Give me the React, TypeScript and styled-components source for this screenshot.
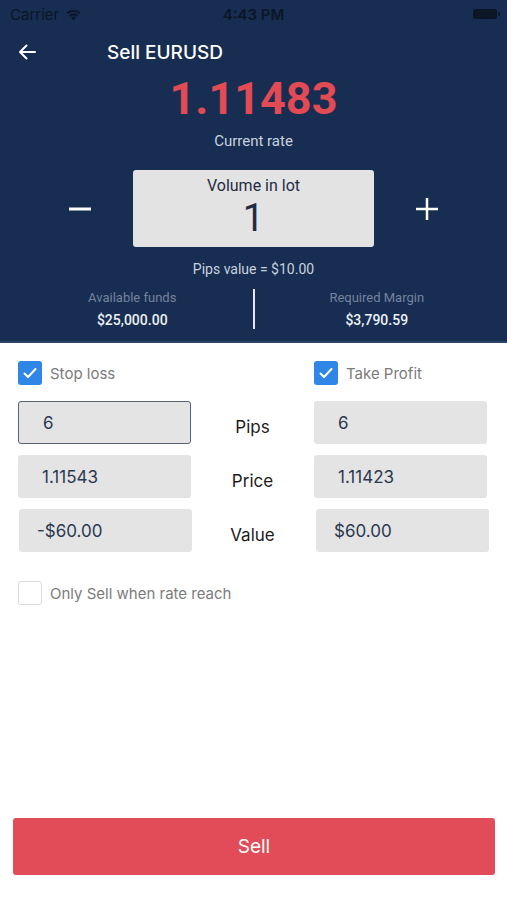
import React from 'react';
import styled, { createGlobalStyle } from 'styled-components';

const GlobalStyle = createGlobalStyle`
  * { box-sizing: border-box; }
  html, body { margin: 0; padding: 0; background: #ffffff; }
  body { font-family: Inter, "Noto Sans", sans-serif; }
`;

const Screen = styled.div`
  width: 507px;
  height: 900px;
  display: flex;
  flex-direction: column;
  background: #ffffff;
  overflow: hidden;
`;

// Header area
const Header = styled.header`
  background: #172d52;
  border-bottom: 2px solid #2c4468;
  padding-bottom: 12px;
`;

const StatusBar = styled.div`
  height: 28px;
  display: grid;
  grid-template-columns: 1fr auto 1fr;
  align-items: center;
  padding: 0 10px;
  color: #0b1626;
  font-size: 15px;
`;

const Carrier = styled.div`
  display: flex;
  align-items: center;
  gap: 6px;
`;

const Clock = styled.div`
  font-weight: 600;
`;

const Battery = styled.div`
  justify-self: end;
  width: 24px;
  height: 10px;
  border-radius: 3px;
  background: #0b1626;
  position: relative;
  &::after {
    content: '';
    position: absolute;
    right: -3px;
    top: 3px;
    width: 2px;
    height: 4px;
    border-radius: 1px;
    background: #0b1626;
  }
`;

const NavBar = styled.div`
  height: 48px;
  display: flex;
  align-items: center;
  padding-left: 18px;
`;

const BackButton = styled.button`
  width: 89px;
  height: 48px;
  padding: 0;
  border: none;
  background: none;
  display: flex;
  align-items: center;
`;

const NavTitle = styled.h1`
  margin: 0;
  font-size: 19px;
  font-weight: 500;
  color: #ffffff;
`;

const RateBlock = styled.div`
  display: flex;
  flex-direction: column;
  align-items: center;
  font-family: Roboto, sans-serif;
`;

const Rate = styled.div`
  font-size: 45px;
  font-weight: 700;
  line-height: 46px;
  color: #e24a54;
`;

const RateLabel = styled.div`
  margin-top: 10px;
  font-size: 15px;
  line-height: 18px;
  color: #c9d2df;
`;

const VolumeRow = styled.div`
  margin-top: 20px;
  display: flex;
  align-items: center;
  justify-content: center;
  gap: 42px;
  font-family: Roboto, sans-serif;
`;

const StepButton = styled.button`
  width: 22px;
  height: 22px;
  padding: 0;
  border: none;
  background: none;
  display: flex;
  align-items: center;
  justify-content: center;
`;

const VolumeBox = styled.div`
  width: 241px;
  height: 77px;
  background: #e3e3e3;
  border-radius: 3px;
  display: flex;
  flex-direction: column;
  align-items: center;
  padding-top: 6px;
  color: #1f2c44;
`;

const VolumeLabel = styled.div`
  font-size: 16px;
  line-height: 20px;
`;

const VolumeValue = styled.div`
  font-size: 38px;
  line-height: 44px;
`;

const PipsValue = styled.div`
  margin-top: 12px;
  text-align: center;
  font-family: Roboto, sans-serif;
  font-size: 14px;
  line-height: 20px;
  color: #c9d2df;
`;

const Stats = styled.div`
  margin-top: 10px;
  display: grid;
  grid-template-columns: 1fr 2px 1fr;
  align-items: center;
  font-family: Roboto, sans-serif;
`;

const Stat = styled.div<{ $side: 'left' | 'right' }>`
  display: flex;
  flex-direction: column;
  align-items: center;
  gap: 4px;
  padding-left: ${(p) => (p.$side === 'left' ? '12px' : '0')};
  padding-right: ${(p) => (p.$side === 'right' ? '8px' : '0')};
`;

const StatLabel = styled.div`
  font-size: 13px;
  line-height: 18px;
  color: #76849d;
`;

const StatValue = styled.div`
  font-size: 14px;
  font-weight: 500;
  line-height: 18px;
  color: #eef1f6;
`;

const Divider = styled.div`
  width: 2px;
  height: 40px;
  background: #e6eaf0;
`;

// Form area
const Form = styled.section`
  flex: 1;
  padding: 16px 20px 0 18px;
`;

const Grid = styled.div`
  display: grid;
  grid-template-columns: 173px 1fr 173px;
  row-gap: 11px;
  align-items: center;
`;

const CheckRow = styled.label`
  display: flex;
  align-items: center;
  gap: 8px;
  height: 28px;
  margin-bottom: 3px;
  font-size: 15px;
  color: #7b7b7b;
`;

const Box = styled.span<{ $checked?: boolean }>`
  width: 24px;
  height: 24px;
  border-radius: 3px;
  display: flex;
  align-items: center;
  justify-content: center;
  background: ${(p) => (p.$checked ? '#2f86e6' : '#ffffff')};
  border: ${(p) => (p.$checked ? 'none' : '1.5px solid #dcdcdc')};
`;

const Field = styled.div<{ $focused?: boolean; $pad?: number; $shift?: number }>`
  height: 43px;
  background: #e4e4e4;
  border-radius: 3px;
  display: flex;
  align-items: center;
  padding-left: ${(p) => p.$pad ?? 24}px;
  margin-left: ${(p) => p.$shift ?? 0}px;
  margin-right: ${(p) => -(p.$shift ?? 0)}px;
  border: ${(p) => (p.$focused ? '1.5px solid #56627a' : 'none')};
  font-size: 17px;
  color: #2b3850;
`;

const RowLabel = styled.div`
  text-align: center;
  padding-top: 8px;
  font-size: 17px;
  color: #1c1c1c;
`;

const LimitRow = styled(CheckRow)`
  margin-top: 27px;
`;

const Footer = styled.div`
  padding: 0 12px 25px 13px;
`;

const SellButton = styled.button`
  width: 100%;
  height: 57px;
  border: none;
  border-radius: 3px;
  background: #e24b58;
  color: #ffffff;
  font-family: Inter, sans-serif;
  font-size: 19px;
`;

const Check = () => (
  <svg width="16" height="16" viewBox="0 0 16 16" fill="none">
    <path d="M2.5 8.5l3.5 3.5 7.5-8" stroke="#fff" strokeWidth="2" strokeLinecap="round" strokeLinejoin="round" />
  </svg>
);

const App = () => {
  return (
    <Screen>
      <GlobalStyle />
      <Header>
        <StatusBar>
          <Carrier>
            Carrier
            <svg width="17" height="13" viewBox="0 0 17 13">
              <path d="M8.5 12.5l2.4-2.9a3.6 3.6 0 0 0-4.8 0z" fill="#0b1626" />
              <path d="M3.9 7.2a6.7 6.7 0 0 1 9.2 0l-1.4 1.6a4.6 4.6 0 0 0-6.4 0z" fill="#0b1626" />
              <path d="M1.5 4.5a10.2 10.2 0 0 1 14 0l-1.4 1.6a8 8 0 0 0-11.2 0z" fill="#0b1626" />
            </svg>
          </Carrier>
          <Clock>4:43 PM</Clock>
          <Battery />
        </StatusBar>
        <NavBar>
          <BackButton aria-label="Back">
            <svg width="18" height="16" viewBox="0 0 18 16" fill="none">
              <path d="M17 8H2M8.5 1.5L2 8l6.5 6.5" stroke="#fff" strokeWidth="2" strokeLinecap="round" strokeLinejoin="round" />
            </svg>
          </BackButton>
          <NavTitle>Sell EURUSD</NavTitle>
        </NavBar>
        <RateBlock>
          <Rate>1.11483</Rate>
          <RateLabel>Current rate</RateLabel>
        </RateBlock>
        <VolumeRow>
          <StepButton aria-label="Decrease">
            <svg width="22" height="22" viewBox="0 0 22 22">
              <path d="M0 11h22" stroke="#fff" strokeWidth="3" />
            </svg>
          </StepButton>
          <VolumeBox>
            <VolumeLabel>Volume in lot</VolumeLabel>
            <VolumeValue>1</VolumeValue>
          </VolumeBox>
          <StepButton aria-label="Increase">
            <svg width="22" height="22" viewBox="0 0 22 22">
              <path d="M0 11h22M11 0v22" stroke="#fff" strokeWidth="2.5" />
            </svg>
          </StepButton>
        </VolumeRow>
        <PipsValue>Pips value = $10.00</PipsValue>
        <Stats>
          <Stat $side="left">
            <StatLabel>Available funds</StatLabel>
            <StatValue>$25,000.00</StatValue>
          </Stat>
          <Divider />
          <Stat $side="right">
            <StatLabel>Required Margin</StatLabel>
            <StatValue>$3,790.59</StatValue>
          </Stat>
        </Stats>
      </Header>

      <Form>
        <Grid>
          <CheckRow>
            <Box $checked><Check /></Box>
            Stop loss
          </CheckRow>
          <span />
          <CheckRow>
            <Box $checked><Check /></Box>
            Take Profit
          </CheckRow>

          <Field $focused>6</Field>
          <RowLabel>Pips</RowLabel>
          <Field>6</Field>

          <Field>1.11543</Field>
          <RowLabel>Price</RowLabel>
          <Field>1.11423</Field>

          <Field $pad={18} $shift={1}>-$60.00</Field>
          <RowLabel>Value</RowLabel>
          <Field $pad={18} $shift={2}>$60.00</Field>
        </Grid>
        <LimitRow>
          <Box />
          Only Sell when rate reach
        </LimitRow>
      </Form>

      <Footer>
        <SellButton>Sell</SellButton>
      </Footer>
    </Screen>
  );
};

export default App;
